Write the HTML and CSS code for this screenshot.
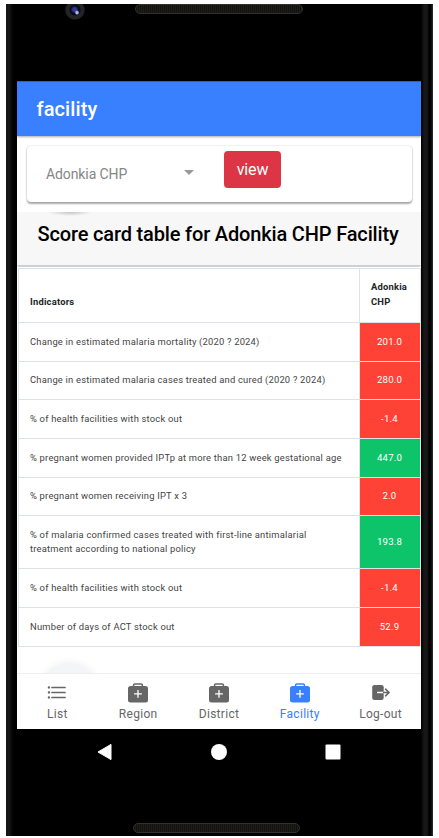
FILE: index.html
```html
<!DOCTYPE html>
<html lang="en">
<head>
<meta charset="utf-8">
<title>facility</title>
<link rel="stylesheet" href="styles.css">
</head>
<body>
<svg class="defs" aria-hidden="true">
  <symbol id="kit" viewBox="0 0 20 20">
    <path d="M5.600 3.500V2Q5.600.9 6.800.9h6.400Q14.400.9 14.400 2v1.500" fill="none" stroke="currentColor" stroke-width="1.500"/>
    <rect y="3" width="20" height="16.500" rx="2.500" fill="currentColor"/>
    <path d="M10 7v7.800M6.100 10.900h7.800" stroke="#fff" stroke-width="1.300"/>
  </symbol>
</svg>
<div class="phone">
  <div class="top-bezel"><span class="camera"></span><span class="speaker"></span></div>
  <main class="screen">
    <header class="app-bar">facility</header>
    <section class="picker">
      <div class="card">
        <span class="select">Adonkia CHP<i class="caret"></i></span>
        <button class="view">view</button>
      </div>
    </section>
    <section class="heading"><h1>Score card table for Adonkia CHP Facility</h1></section>
    <table>
      <thead><tr class="head"><th>Indicators</th><th>Adonkia<br>CHP</th></tr></thead>
      <tbody>
        <tr><td>Change in estimated malaria mortality (2020 ? 2024)</td><td class="bad">201.0</td></tr>
        <tr><td>Change in estimated malaria cases treated and cured (2020 ? 2024)</td><td class="bad">280.0</td></tr>
        <tr><td>% of health facilities with stock out</td><td class="bad">-1.4</td></tr>
        <tr><td>% pregnant women provided IPTp at more than 12 week gestational age</td><td class="good">447.0</td></tr>
        <tr><td>% pregnant women receiving IPT x 3</td><td class="bad">2.0</td></tr>
        <tr class="tall"><td>% of malaria confirmed cases treated with first-line antimalarial<br>treatment according to national policy</td><td class="good">193.8</td></tr>
        <tr><td>% of health facilities with stock out</td><td class="bad">-1.4</td></tr>
        <tr><td>Number of days of ACT stock out</td><td class="bad">52.9</td></tr>
      </tbody>
    </table>
    <div class="rest"><span class="fab"></span></div>
    <nav class="tabs">
      <a class="tab"><svg viewBox="0 0 20 20"><path d="M5 4.500h13M5 9.500h13M5 14.500h13" stroke="currentColor" stroke-width="1.700" stroke-linecap="round"/><path d="M1.900 4.500h.1M1.900 9.500h.1M1.900 14.500h.1" stroke="currentColor" stroke-width="2.300" stroke-linecap="round"/></svg>List</a>
      <a class="tab"><svg><use href="#kit"/></svg>Region</a>
      <a class="tab"><svg><use href="#kit"/></svg>District</a>
      <a class="tab active"><svg><use href="#kit"/></svg>Facility</a>
      <a class="tab"><svg viewBox="0 0 20 20"><rect x="1.200" y="2" width="11.500" height="15" rx="2.300" fill="currentColor"/><path d="M6 9.500h6.700" stroke="#fff" stroke-width="1.500"/><path d="M12.700 9.500h5.300M14.600 6.200l3.500 3.300-3.500 3.300" fill="none" stroke="currentColor" stroke-width="1.600" stroke-linecap="round" stroke-linejoin="round"/></svg>Log-out</a>
    </nav>
  </main>
  <div class="system-nav">
    <svg viewBox="0 0 18 18"><path d="M2 9 15 1.400v15.200z" fill="#fff" stroke="#fff" stroke-linejoin="round"/></svg>
    <svg viewBox="0 0 18 18"><circle cx="9" cy="9" r="8" fill="#fff"/></svg>
    <svg viewBox="0 0 18 18"><rect x="1.500" y="1.500" width="15" height="15" rx="1" fill="#fff"/></svg>
  </div>
  <div class="bottom-bezel"><span class="speaker"></span></div>
</div>
</body>
</html>
```
FILE: styles.css
```css
* { box-sizing: border-box; }
body { margin: 0; background: #fff; font-family: Roboto, sans-serif; }
.defs { display: none; }
.phone {
  width: 427px; height: 832px; margin: 4px 0 0 6px; padding: 0 12px 0 11px;
  display: flex; flex-direction: column; overflow: hidden;
  background: linear-gradient(90deg, #121312 0, #171817 3px, #060606 6px, #000 8px, #000 415px, #171717 418px, #171717 421px, #000 423px, #050505 425px, #343434 427px);
}
.top-bezel { height: 77px; flex: none; position: relative; }
.camera {
  position: absolute; left: 48px; top: -4px; width: 20px; height: 20px; border-radius: 50%;
  background: radial-gradient(circle at 60% 63%, #aab8ff 0 1px, transparent 2.500px), radial-gradient(circle at 48% 48%, #353a91 0 1.500px, transparent 4px), radial-gradient(circle at 50% 50%, #080917 0 5px, #242427 6px 9px, #0b0b0b 10px);
}
.speaker {
  position: absolute; width: 168px; height: 10px; border: 1px solid #30302d; border-radius: 5px;
  background: repeating-linear-gradient(90deg, #11110f 0 1px, #201e18 1px 2px);
}
.top-bezel .speaker { left: 118px; top: 0; }
.screen { width: 404px; height: 648px; flex: none; background: #fff; display: flex; flex-direction: column; overflow: hidden; }
.app-bar {
  height: 55px; flex: none; padding: 0 19.500px; border-top: 1px solid #2c62bb;
  background: #3880ff; color: #fff; font-size: 20px; font-weight: 500; line-height: 54px; letter-spacing: .1px;
  box-shadow: 0 1px 2px #0005; position: relative; z-index: 1;
}
.picker { height: 76px; flex: none; padding: 10px 9px 9px 10px; }
.card {
  height: 56px; display: flex; align-items: flex-start; padding: 5px 0 0 19px;
  border-radius: 4px; box-shadow: 0 1.500px 2px #0005, 0 0 2px #0002;
}
.select {
  width: 178px; height: 46px; display: flex; align-items: center; justify-content: space-between;
  padding-right: 30px; color: #868686; font-size: 14px; letter-spacing: -.1px;
}
.caret { border: 5px solid transparent; border-top-color: #999; border-bottom: 0; margin-top: -3px; }
.view {
  width: 57px; height: 37px; padding: 0; border: 0; border-radius: 4px; background: #dc3545;
  color: #fff; font: 16px Roboto, sans-serif; letter-spacing: -.1px;
}
.heading {
  height: 55px; flex: none; border-bottom: 2px solid #ced0d1; border-radius: 0 0 2px 2px;
  background: radial-gradient(ellipse 22px 4px at 53px 0, #c4c4c4, transparent), #f7f7f7;
}
h1 { margin: 0; padding-left: 20.500px; color: #000; font-size: 20px; font-weight: 500; line-height: 44px; letter-spacing: -.16px; white-space: nowrap; }
table {
  width: 403px; margin: 1px 0 0 1px; flex: none; table-layout: fixed; border-collapse: collapse;
  border: 1px solid #dee2e6; color: #444; font-size: 9.400px; line-height: 14.500px; letter-spacing: .21px;
}
th, td { height: 38.700px; padding: 0 0 0 11px; border: 1px solid #dee2e6; text-align: left; white-space: nowrap; }
th { height: 54px; padding-bottom: 13px; vertical-align: bottom; color: #212529; font-weight: 700; }
th:last-child { width: 61px; }
.tall td { height: 53px; }
td.bad, td.good { padding: 0 1px 0 0; text-align: center; color: #fff; font-size: 9.600px; }
.bad { background: #ff4136; }
.good { background: #0ec46b; }
.rest { flex: 1; position: relative; overflow: hidden; }
.fab { position: absolute; left: 26px; top: 17px; width: 53px; height: 53px; border-radius: 50%; background: #f4f5f8; box-shadow: 0 2px 12px #0002; }
.tabs { height: 56px; flex: none; display: flex; border-top: 1px solid #eee; background: #fff; position: relative; }
.tab {
  flex: 1; display: flex; flex-direction: column; align-items: center; padding-top: 9px;
  color: #666; font-size: 12px; line-height: 14px; letter-spacing: .3px;
}
.tab svg { width: 20px; height: 20px; margin-bottom: 4px; }
.active { color: #3880ff; }
.system-nav { height: 46px; flex: none; display: flex; justify-content: center; gap: 96px; align-items: center; }
.system-nav svg { width: 18px; height: 18px; }
.bottom-bezel { flex: 1; position: relative; }
.bottom-bezel .speaker { left: 116px; top: 48px; width: 167px; }
```
